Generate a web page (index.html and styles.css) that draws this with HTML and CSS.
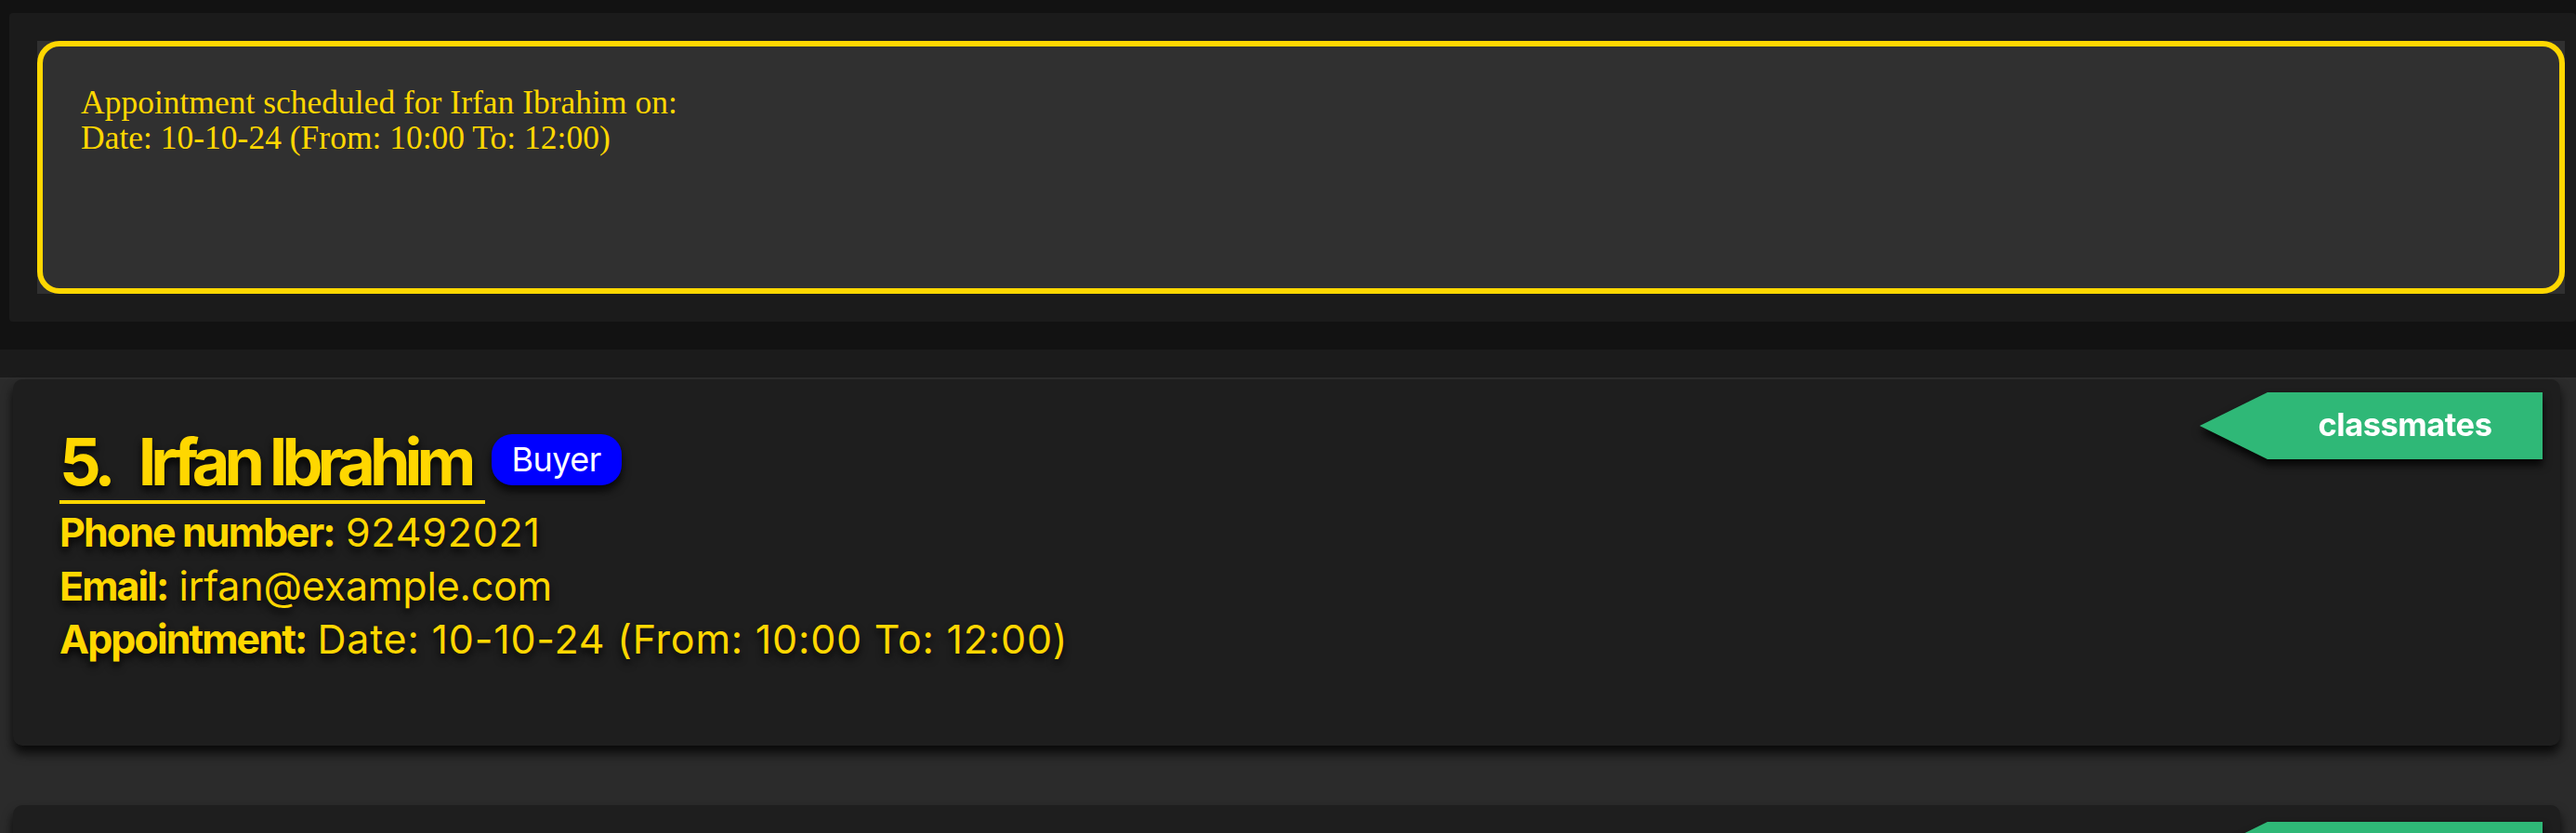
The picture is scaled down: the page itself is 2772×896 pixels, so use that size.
FILE: index.html
```html
<!DOCTYPE html>
<html lang="en">
<head>
<meta charset="utf-8">
<title>Appointment</title>
<link rel="stylesheet" href="styles.css">
</head>
<body>
  <section class="result-panel">
    <div class="result-frame">
      <div class="result-box">
        <p class="result-line">Appointment scheduled for Irfan Ibrahim on:</p>
        <p class="result-line">Date: 10-10-24 (From: 10:00 To: 12:00)</p>
      </div>
    </div>
  </section>

  <section class="list-section">
    <div class="person-list">
      <article class="card">
        <div class="tag-wrap"><div class="tag">classmates</div></div>
        <div class="name-row">
          <h2 class="name"><span class="index">5.</span><span class="full-name">Irfan Ibrahim</span></h2>
          <span class="role">Buyer</span>
        </div>
        <div class="details">
          <p class="field"><b class="label">Phone number:</b> <span class="value value-num">92492021</span></p>
          <p class="field"><b class="label">Email:</b> <span class="value">irfan@example.com</span></p>
          <p class="field"><b class="label">Appointment:</b> <span class="value value-num">Date: 10-10-24 (From: 10:00 To: 12:00)</span></p>
        </div>
      </article>
      <article class="card card-next">
        <div class="tag-wrap"><div class="tag"></div></div>
      </article>
    </div>
  </section>
</body>
</html>
```

FILE: styles.css
```css
* { box-sizing: border-box; }

html, body {
  margin: 0;
  padding: 0;
}

body {
  width: 2772px;
  height: 896px;
  overflow: hidden;
  background: #121212;
  font-family: "Inter", "Roboto", sans-serif;
  padding-top: 14px;
}

/* ---------- result panel ---------- */
.result-panel {
  margin-left: 10px;
  background: #1b1b1b;
  border-radius: 4px;
  padding: 30px 12px 30px 30px;
}

.result-frame {
  background: #303030;
  height: 272px;
}

.result-box {
  height: 100%;
  border: 6px solid #ffd700;
  border-radius: 24px;
  padding: 41px 40px 0 41px;
  background: #303030;
}

.result-line {
  margin: 0;
  font-family: "Liberation Serif", "Times New Roman", serif;
  font-size: 35.5px;
  line-height: 38px;
  color: #ffd700;
}

/* ---------- list ---------- */
.list-section {
  margin-top: 30px;
  background: #1b1b1b;
  padding-top: 30px;
}

.person-list {
  border-top: 2px solid #2e2e2e;
  background: #2b2b2b;
  padding-bottom: 40px;
}

.card {
  position: relative;
  margin: 0 17px 64px 14px;
  height: 394px;
  background: #1e1e1e;
  border-radius: 10px;
  box-shadow: 0 8px 12px rgba(0, 0, 0, 0.8);
  padding: 51px 0 0 50px;
  color: #ffd700;
}

.tag-wrap {
  position: absolute;
  top: 14px;
  right: 19px;
  filter: drop-shadow(0 6px 5px rgba(0, 0, 0, 0.85));
}

.card-next .tag-wrap {
  top: 18px;
}

.tag {
  width: 369px;
  height: 72px;
  padding-left: 73px;
  background: #2fb877;
  clip-path: polygon(73px 0, 100% 0, 100% 100%, 73px 100%, 0 50%);
  color: #ffffff;
  font-family: "Inter", sans-serif;
  font-weight: 700;
  font-size: 34.5px;
  letter-spacing: -0.5px;
  line-height: 70px;
  text-align: center;
}

.name-row {
  display: flex;
  align-items: flex-start;
}

.name {
  margin: 0;
  font-size: 70px;
  font-weight: 700;
  line-height: 75px;
  letter-spacing: -0.085em;
  padding: 0 15px 4px 0;
  border-bottom: 4px solid #ffd700;
  text-shadow: 0 5px 8px rgba(0, 0, 0, 0.9);
  white-space: nowrap;
}

.full-name {
  margin-left: 30px;
}

.role {
  margin: 8px 0 0 7px;
  height: 55px;
  line-height: 55px;
  padding: 0 22px;
  border-radius: 22px;
  background: #0000ff;
  color: #ffffff;
  font-size: 36px;
  letter-spacing: -0.5px;
  box-shadow: 0 6px 10px rgba(0, 0, 0, 0.8);
}

.details {
  margin-top: 2px;
}

.field {
  margin: 0;
  font-size: 43px;
  line-height: 57.5px;
  white-space: nowrap;
  text-shadow: 0 5px 8px rgba(0, 0, 0, 0.9);
}

.label {
  font-weight: 700;
  letter-spacing: -0.045em;
}

.value {
  font-weight: 400;
  letter-spacing: -0.005em;
}

.value-num {
  letter-spacing: 0.018em;
}
```
